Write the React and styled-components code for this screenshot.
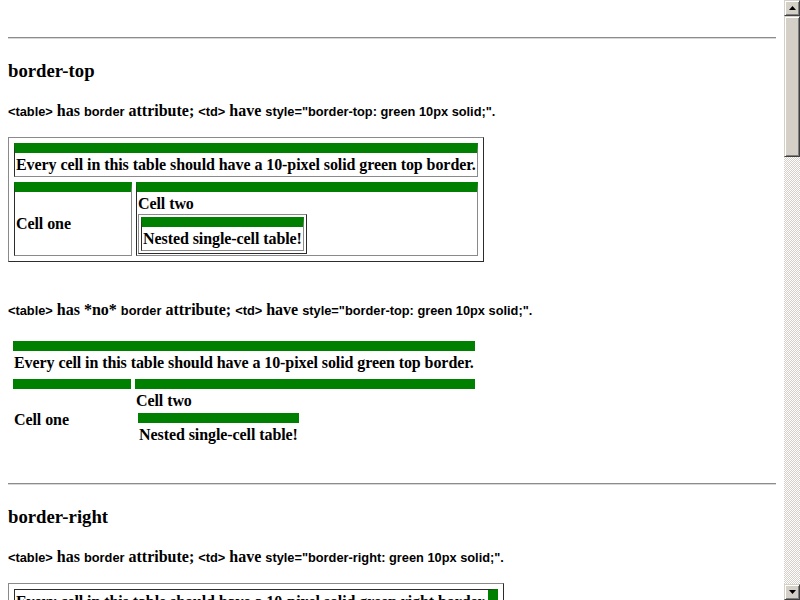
import React from "react";
import styled, { createGlobalStyle, css } from "styled-components";

const GlobalStyle = createGlobalStyle`
  html, body { margin: 0; padding: 0; background: #fff; overflow: hidden; }
`;

const Screen = styled.div`
  display: flex;
  width: 800px;
  height: 600px;
  overflow: hidden;
  background: #fff;
`;

const Viewport = styled.div`
  flex: 1;
  height: 600px;
  overflow: hidden;
`;

const Page = styled.div`
  padding: 8px;
  font-family: "Liberation Serif", serif;
  color: #000;
`;

const Rule = styled.hr`
  margin: ${(p) => p.$top}px 0 0;
  height: 0;
  border: 0;
  border-top: 1px solid #8c8c8c;
  border-bottom: 1px solid #d8d8d8;
`;

const Heading = styled.h3`
  margin: 21px 0 0;
  font: bold 18.72px/21px "Liberation Serif", serif;
`;

const Note = styled.h4`
  margin: ${(p) => p.$top}px 0 0;
  font: bold 16px/18px "Liberation Serif", serif;
`;

const Code = styled.code`
  font: bold 12.8px "Liberation Sans", Arial, sans-serif;
`;

const Table = styled.table`
  border-collapse: separate;
  border-spacing: ${(p) => (p.$nested ? "2px" : "4px 5px")};
  padding: ${(p) => (p.$nested ? "0" : "0 1px")};
  margin-top: ${(p) => p.$top || 0}px;
  border-style: solid;
  border-width: ${(p) => (p.$bordered ? "1px" : "0")};
  border-color: #8a8a8a #2c2c2c #2c2c2c #8a8a8a;
  font: bold 16px/21px "Liberation Serif", serif;
  letter-spacing: -0.08px;
  color: #000;
`;

const sideBorder = {
  top: css`border-top: 10px solid #008000;`,
  right: css`border-right: 10px solid #008000;`,
};

const Cell = styled.td`
  box-sizing: border-box;
  width: ${(p) => (p.$lead ? "118px" : "auto")};
  padding: 1px;
  vertical-align: middle;
  white-space: nowrap;
  border-style: solid;
  border-width: ${(p) => (p.$bordered ? "1px" : "0")};
  border-color: #2c2c2c #8a8a8a #8a8a8a #2c2c2c;
  ${(p) => sideBorder[p.$side]}
`;

const Scrollbar = styled.div`
  width: 16px;
  height: 600px;
  display: flex;
  flex-direction: column;
  background: repeating-conic-gradient(#d4d0c8 0 25%, #ffffff 0 50%) 0 0 / 2px 2px;
`;

const bevel = css`
  box-sizing: border-box;
  background: #d4d0c8;
  border-style: solid;
  border-width: 1px;
  border-color: #d4d0c8 #404040 #404040 #d4d0c8;
  box-shadow: inset 1px 1px 0 #ffffff, inset -1px -1px 0 #808080;
`;

const ArrowButton = styled.div`
  ${bevel}
  width: 16px;
  height: 16px;
  display: flex;
  align-items: center;
  justify-content: center;
`;

const Thumb = styled.div`
  ${bevel}
  width: 16px;
  height: 141px;
`;

const Track = styled.div`
  flex: 1;
`;

function Arrow({ dir }) {
  return (
    <svg width="7" height="4" viewBox="0 0 7 4">
      {dir === "up" ? (
        <polygon points="3.5,0 7,4 0,4" fill="#000" />
      ) : (
        <polygon points="0,0 7,0 3.5,4" fill="#000" />
      )}
    </svg>
  );
}

function Description({ side, noBorder, top }) {
  return (
    <Note $top={top}>
      <Code>&lt;table&gt;</Code> has {noBorder ? "*no* " : ""}
      <Code>border</Code> attribute; <Code>&lt;td&gt;</Code> have{" "}
      <Code>style="border-{side}: green 10px solid;".</Code>
    </Note>
  );
}

function TestTable({ side, bordered, top }) {
  return (
    <Table $bordered={bordered} $top={top}>
      <tbody>
        <tr>
          <Cell $bordered={bordered} $side={side} colSpan={2}>
            Every cell in this table should have a 10-pixel solid green {side} border.
          </Cell>
        </tr>
        <tr>
          <Cell $bordered={bordered} $side={side} $lead>Cell one</Cell>
          <Cell $bordered={bordered} $side={side}>
            Cell two
            <Table $bordered={bordered} $nested>
              <tbody>
                <tr>
                  <Cell $bordered={bordered} $side={side}>Nested single-cell table!</Cell>
                </tr>
              </tbody>
            </Table>
          </Cell>
        </tr>
      </tbody>
    </Table>
  );
}

export default function App() {
  return (
    <>
      <GlobalStyle />
      <Screen>
        <Viewport>
          <Page>
            <Rule $top={29} />
            <Heading>border-top</Heading>
            <Description side="top" top={21} />
            <TestTable side="top" bordered top={17} />
            <Description side="top" noBorder top={39} />
            <TestTable side="top" top={17} />
            <Rule $top={29} />
            <Heading>border-right</Heading>
            <Description side="right" top={21} />
            <TestTable side="right" bordered top={17} />
          </Page>
        </Viewport>
        <Scrollbar>
          <ArrowButton><Arrow dir="up" /></ArrowButton>
          <Thumb />
          <Track />
          <ArrowButton><Arrow dir="down" /></ArrowButton>
        </Scrollbar>
      </Screen>
    </>
  );
}
